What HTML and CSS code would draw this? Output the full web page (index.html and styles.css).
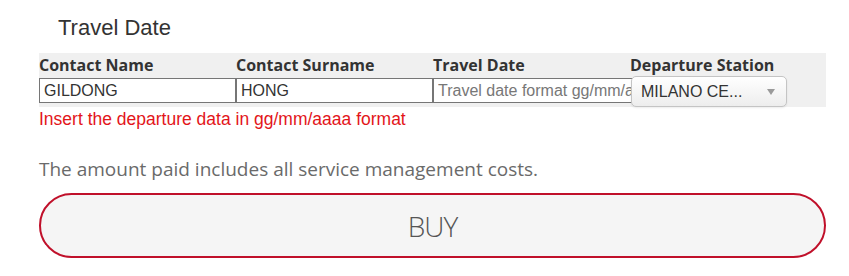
FILE: index.html
```html
<!DOCTYPE html>
<html lang="en">
<head>
    <meta charset="UTF-8">
    <meta name="viewport" content="width=device-width, initial-scale=1.0">
    <title>Travel Date</title>
    <link rel="stylesheet" href="styles.css">
</head>
<body>
    <div class="page">
        <h2 class="title">Travel Date</h2>
        <div class="contact">
            <label class="label">Contact Name</label>
            <label class="label">Contact Surname</label>
            <label class="label">Travel Date</label>
            <label class="label">Departure Station</label>

            <input class="field" type="text" value="GILDONG">
            <input class="field" type="text" value="HONG">
            <input class="field field-date" type="text" placeholder="Travel date format gg/mm/aaaa">
            <div class="select">
                <span class="select-text">MILANO CE...</span>
                <span class="select-arrow"></span>
            </div>
        </div>
        <p class="error">Insert the departure data in gg/mm/aaaa format</p>
        <p class="note">The amount paid includes all service management costs.</p>
        <button class="buy">BUY</button>
    </div>
</body>
</html>
```

FILE: styles.css
```css
body {
    margin: 0;
    background: #fff;
    font-family: Arial, "Liberation Sans", sans-serif;
}
.page {
    width: 787px;
    padding: 15px 0 0 39px;
}
.title {
    margin: 0 0 12px;
    padding-left: 19px;
    font-size: 22px;
    font-weight: normal;
    line-height: 26px;
    color: #333;
}
.contact {
    display: grid;
    grid-template-columns: repeat(4, 197px);
    align-items: start;
    row-gap: 1px;
    background: #f0f0f0;
}
.label {
    font-family: "Open Sans", sans-serif;
    font-weight: bold;
    font-size: 16px;
    line-height: 24px;
    color: #333;
    white-space: nowrap;
}
.field {
    box-sizing: border-box;
    width: 197px;
    height: 25px;
    margin: 0;
    padding: 0 4px;
    border: 1px solid #767676;
    border-radius: 0;
    background: #fff;
    font-family: Arial, "Liberation Sans", sans-serif;
    font-size: 16px;
    color: #333;
    outline: none;
}
.field::placeholder {
    color: #777;
}
.field-date {
    width: 220px;
}
.select {
    position: relative;
    z-index: 1;
    box-sizing: border-box;
    display: flex;
    align-items: center;
    justify-content: space-between;
    width: 156px;
    height: 31px;
    margin: -2px 0 0 1px;
    padding: 0 11px 0 9px;
    border: 1px solid #c4c4c4;
    border-radius: 5px;
    background: linear-gradient(#ffffff, #ededed);
    box-shadow: 0 1px 2px rgba(0, 0, 0, 0.08);
    font-size: 16px;
    color: #333;
}
.select-arrow {
    width: 0;
    height: 0;
    border-left: 4px solid transparent;
    border-right: 4px solid transparent;
    border-top: 6px solid #9a9a9a;
}
.error {
    margin: 2px 0 0;
    font-size: 17.5px;
    line-height: 20px;
    color: #e3151a;
}
.note {
    margin: 28px 0 0;
    font-family: "Open Sans", sans-serif;
    font-size: 19px;
    line-height: 24px;
    color: #6a6a6a;
}
.buy {
    display: block;
    box-sizing: border-box;
    width: 787px;
    height: 65px;
    margin-top: 12px;
    border: 2px solid #c0102a;
    border-radius: 33px;
    background: #f5f5f5;
    font-family: "Open Sans", sans-serif;
    font-weight: 300;
    font-size: 28px;
    letter-spacing: -1px;
    color: #555;
    cursor: pointer;
}
```
